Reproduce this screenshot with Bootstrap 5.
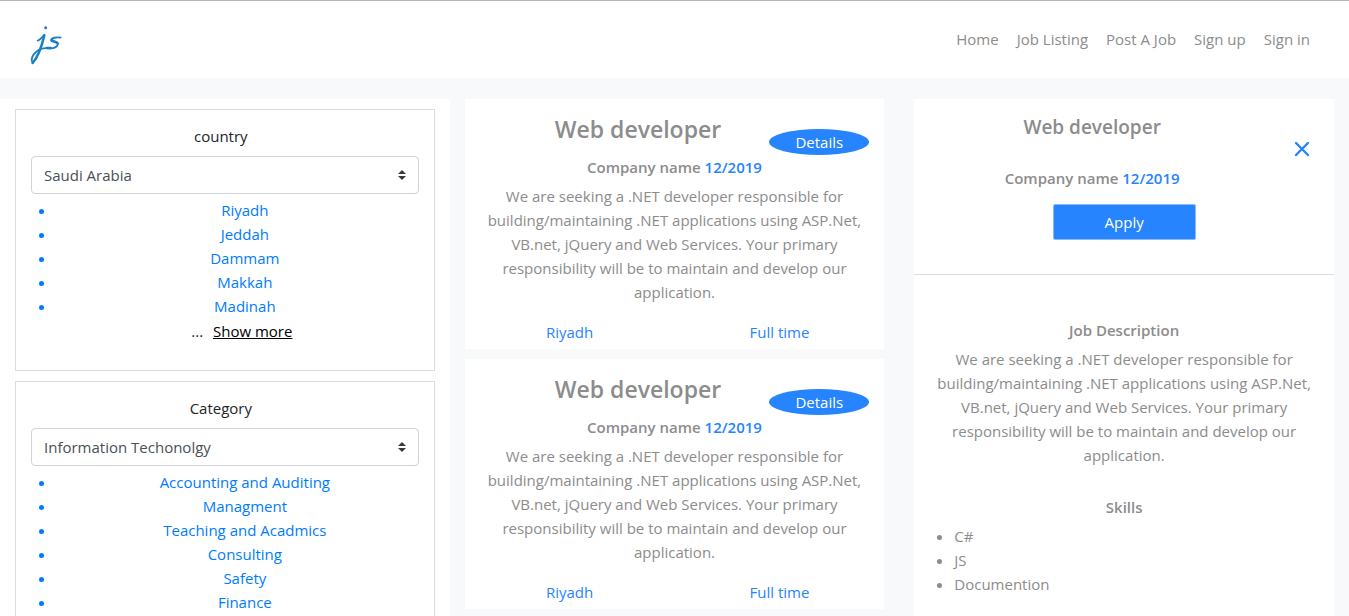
<!DOCTYPE html>
<html lang="en">
<head>
<meta charset="utf-8">
<meta name="viewport" content="width=device-width, initial-scale=1">
<title>Job Listing</title>
<link rel="stylesheet" href="https://cdn.jsdelivr.net/npm/bootstrap@5.3.0/dist/css/bootstrap.min.css">
<style>
  :root { --accent: #2684ff; --muted: #8c8c8c; --line: #dadcdf; }
  body { font-family: "Open Sans", "Noto Sans", sans-serif; font-size: 15px; line-height: 24px; color: #212529; background: #f8f9fb; }
  a { text-decoration: none; }
  .site-nav { background: #fff; border-top: 1px solid #b4b4b4; padding: 18px 30px 13px; }
  .site-nav .navbar-brand { padding: 5px 0 0; margin: 0; line-height: 0; }
  .site-nav .navbar-nav .nav-link { color: var(--muted); padding: 8px 9px; }
  .site-nav .navbar-nav { margin-bottom: 6px; }
  .board { --bs-gutter-x: 30px; margin-top: 21px; }
  .filters { background: #fff; padding-top: 10px; }
  .filter-box { border: 1px solid var(--line); padding: 14px 15px 27px; margin-bottom: 10px; }
  .filter-label { display: block; padding-right: 8px; margin-bottom: 8px; }
  .form-select { height: 38px; font-size: 15px; color: #495057; border-color: #ced4da; border-radius: 4px; padding: 6px 28px 6px 12px;
    background-image: url("data:image/svg+xml,%3csvg xmlns='http://www.w3.org/2000/svg' viewBox='0 0 4 5'%3e%3cpath fill='%23343a40' d='M2 0L0 2h4zm0 5L0 3h4z'/%3e%3c/svg%3e");
    background-position: right 12px center; background-size: 8px 10px; }
  .filter-list { color: #007bff; margin: 4px 0 0; padding-left: 25px; }
  .filter-list li { padding-left: 15px; }
  .filter-list a { color: inherit; }
  .more { padding-left: 34px; margin-top: 1px; }
  .more a { color: #000; text-decoration: underline; margin-left: 6px; }
  .panel { background: #fff; color: var(--muted); text-align: center; }
  .job { padding: 15px 15px 5px; margin-bottom: 10px; }
  .job-head { padding-left: 27px; height: 41px; }
  .job-title { font-size: 23px; font-weight: 600; line-height: 30px; margin: 0; }
  .detail-title { font-size: 19px; font-weight: 600; line-height: 24px; margin: 0 0 27px; }
  .sub { font-size: 15px; font-weight: 600; line-height: 24px; margin: 0 0 5px; }
  .sub span, .job-tags a { color: var(--accent); }
  .btn-oval { width: 100px; height: 26px; padding: 0; margin-top: 15px; border: 0; border-radius: 50%; background: var(--accent); color: #fff; font-size: 15px; }
  .job p { margin: 0 0 16px; }
  .job-tags { --bs-gutter-x: 30px; }
  .detail-head { border-bottom: 1px solid var(--line); padding: 16px 0 34px; }
  .close-col { width: 64px; padding-top: 26px; }
  .btn-x { padding: 0; border: 0; line-height: 0; color: var(--accent); }
  .btn-apply { width: 143px; height: 36px; padding: 0; border: 1px solid #8bb9ff; border-radius: 2px; background: var(--accent); color: #fff; font-size: 15px; font-weight: 500; margin-top: 9px; }
  .detail-body { padding: 43px 15px 16px; }
  .detail-body p { margin: 0 0 28px; }
  .skills { text-align: left; padding-left: 25px; margin: 0; }
</style>
</head>
<body>
<nav class="navbar navbar-expand site-nav">
  <a class="navbar-brand" href="#" aria-label="Home">
    <svg width="32" height="40" viewBox="90 74 96 120" fill="none" stroke="#1b7fc4" stroke-linecap="round" stroke-linejoin="round">
      <circle cx="137" cy="82" r="4.500" fill="#1b7fc4" stroke="none"/>
      <path stroke-width="5.500" d="M113 121Q121 118 132 104M98 187C91 178 98 163 109 154C121 144 133 142 147 144C163 146 175 137 173 130C171 122 154 126 154 120C154 113 168 109 182 112"/>
      <path stroke-width="7.500" d="M133 105C127 130 114 170 98 188M140 143H152M154 119C157 124 169 123 173 129"/>
    </svg>
  </a>
  <div class="navbar-nav ms-auto">
    <a class="nav-link" href="#">Home</a>
    <a class="nav-link" href="#">Job Listing</a>
    <a class="nav-link" href="#">Post A Job</a>
    <a class="nav-link" href="#">Sign up</a>
    <a class="nav-link" href="#">Sign in</a>
  </div>
</nav>

<main class="row board mx-0">
  <aside class="col-4 filters text-center">
    <section class="filter-box">
      <label class="filter-label" for="country">country</label>
      <select class="form-select" id="country"><option>Saudi Arabia</option></select>
      <ul class="filter-list">
        <li><a href="#">Riyadh</a></li>
        <li><a href="#">Jeddah</a></li>
        <li><a href="#">Dammam</a></li>
        <li><a href="#">Makkah</a></li>
        <li><a href="#">Madinah</a></li>
      </ul>
      <div class="more">... <a href="#">Show more</a></div>
    </section>
    <section class="filter-box mb-0">
      <label class="filter-label" for="category">Category</label>
      <select class="form-select" id="category"><option>Information Techonolgy</option></select>
      <ul class="filter-list">
        <li><a href="#">Accounting and Auditing</a></li>
        <li><a href="#">Managment</a></li>
        <li><a href="#">Teaching and Acadmics</a></li>
        <li><a href="#">Consulting</a></li>
        <li><a href="#">Safety</a></li>
        <li><a href="#">Finance</a></li>
      </ul>
    </section>
  </aside>

  <section class="col-4">
    <article class="panel job">
      <div class="job-head d-flex">
        <h2 class="job-title flex-grow-1">Web developer</h2>
        <button type="button" class="btn btn-oval">Details</button>
      </div>
      <h3 class="sub">Company name <span>12/2019</span></h3>
      <p>We are seeking a .NET developer responsible for building/maintaining .NET applications using ASP.Net, VB.net, jQuery and Web Services. Your primary responsibility will be to maintain and develop our application.</p>
      <div class="job-tags row"><div class="col-6"><a href="#">Riyadh</a></div><div class="col-6"><a href="#">Full time</a></div></div>
    </article>
    <article class="panel job mb-0">
      <div class="job-head d-flex">
        <h2 class="job-title flex-grow-1">Web developer</h2>
        <button type="button" class="btn btn-oval">Details</button>
      </div>
      <h3 class="sub">Company name <span>12/2019</span></h3>
      <p>We are seeking a .NET developer responsible for building/maintaining .NET applications using ASP.Net, VB.net, jQuery and Web Services. Your primary responsibility will be to maintain and develop our application.</p>
      <div class="job-tags row"><div class="col-6"><a href="#">Riyadh</a></div><div class="col-6"><a href="#">Full time</a></div></div>
    </article>
  </section>

  <section class="col-4 d-flex">
    <article class="panel w-100">
      <header class="detail-head">
        <div class="d-flex">
          <div class="flex-grow-1">
            <h2 class="detail-title">Web developer</h2>
            <h3 class="sub">Company name <span>12/2019</span></h3>
          </div>
          <div class="close-col d-flex justify-content-center align-items-start">
            <button type="button" class="btn btn-x" aria-label="Close">
              <svg width="16" height="16" viewBox="0 0 16 16" fill="none" stroke="currentColor" stroke-width="2.400" stroke-linecap="round"><path d="M2 2L14 14M14 2L2 14"/></svg>
            </button>
          </div>
        </div>
        <button type="button" class="btn btn-apply">Apply</button>
      </header>
      <div class="detail-body">
        <h3 class="sub">Job Description</h3>
        <p>We are seeking a .NET developer responsible for building/maintaining .NET applications using ASP.Net, VB.net, jQuery and Web Services. Your primary responsibility will be to maintain and develop our application.</p>
        <h3 class="sub">Skills</h3>
        <ul class="skills">
          <li>C#</li>
          <li>JS</li>
          <li>Documention</li>
        </ul>
      </div>
    </article>
  </section>
</main>
<script src="https://cdn.jsdelivr.net/npm/bootstrap@5.3.0/dist/js/bootstrap.bundle.min.js"></script>
</body>
</html>
